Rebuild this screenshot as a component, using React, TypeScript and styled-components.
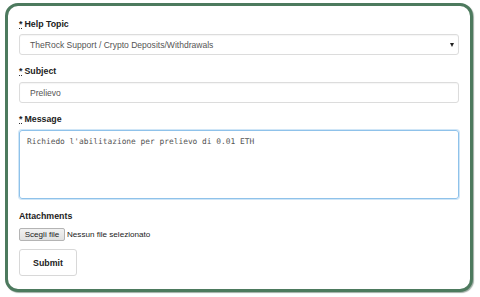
import React from "react";
import styled, { createGlobalStyle } from "styled-components";

const Global = createGlobalStyle`
  html, body { margin: 0; padding: 0; background: #ffffff; }
  body { font-family: "Liberation Sans", Arial, sans-serif; }
  * { box-sizing: border-box; }
`;

const Page = styled.div`
  width: 480px;
  height: 297px;
  padding: 3px 7px 5px 5px;
  background: #ffffff;
`;

const Frame = styled.form`
  height: 289px;
  border: 3px solid #4d7a5e;
  border-radius: 13px;
  box-shadow: 1px 1px 1px rgba(40, 70, 50, 0.45);
  background: #ffffff;
  padding: 12px 11px 13px 11px;
  display: flex;
  flex-direction: column;
`;

const Group = styled.div<{ $gap: number }>`
  display: flex;
  flex-direction: column;
  margin-bottom: ${(p) => p.$gap}px;
`;

const Label = styled.label<{ $mb: number }>`
  font-size: 8.8px;
  line-height: 12px;
  font-weight: 700;
  color: #222;
  margin-bottom: ${(p) => p.$mb}px;
  display: flex;
  align-items: baseline;
  gap: 2px;
`;

const Req = styled.abbr`
  text-decoration: none;
  border-bottom: 1px dotted #333;
  line-height: 7px;
  font-size: 8.8px;
`;

const Field = styled.div`
  position: relative;
  height: 21px;
  border: 1px solid #dcdcdc;
  border-radius: 3px;
  box-shadow: inset 0 1px 1px rgba(0, 0, 0, 0.04);
  display: flex;
  align-items: center;
  padding: 0 10px;
  font-size: 8.55px;
  color: #555;
`;

const Arrow = styled.span`
  position: absolute;
  right: 4px;
  top: 8px;
  width: 0;
  height: 0;
  border-left: 2.5px solid transparent;
  border-right: 2.5px solid transparent;
  border-top: 4px solid #222;
`;

const TextArea = styled.div`
  height: 69px;
  border: 1px solid #8fc2ea;
  border-radius: 3px;
  box-shadow: 0 0 0 1px rgba(170, 210, 240, 0.55);
  padding: 6px 7px;
  font-family: "DejaVu Sans Mono", "Liberation Mono", monospace;
  font-size: 7.86px;
  line-height: 10px;
  color: #555;
  white-space: pre;
`;

const FileRow = styled.div`
  display: flex;
  align-items: center;
  gap: 2px;
  font-size: 8.1px;
  color: #222;
`;

const FileButton = styled.span`
  height: 13px;
  width: 46px;
  display: flex;
  align-items: center;
  justify-content: center;
  background: linear-gradient(#f2f2f2, #e0e0e0);
  border: 1px solid #b4b4b4;
  border-radius: 2px;
  font-size: 8.1px;
  color: #222;
`;

const Submit = styled.button`
  width: 58px;
  height: 27px;
  background: #ffffff;
  border: 1px solid #d8d8d8;
  border-radius: 3px;
  font-family: "Liberation Sans", Arial, sans-serif;
  font-weight: 700;
  font-size: 8.8px;
  color: #222;
  padding: 0;
`;

export default function App() {
  return (
    <Page>
      <Global />
      <Frame onSubmit={(e) => e.preventDefault()}>
        <Group $gap={10}>
          <Label $mb={4}>
            <Req title="required">*</Req> Help Topic
          </Label>
          <Field>
            TheRock Support / Crypto Deposits/Withdrawals
            <Arrow />
          </Field>
        </Group>
        <Group $gap={10}>
          <Label $mb={5}>
            <Req title="required">*</Req> Subject
          </Label>
          <Field>Prelievo</Field>
        </Group>
        <Group $gap={11}>
          <Label $mb={5}>
            <Req title="required">*</Req> Message
          </Label>
          <TextArea>Richiedo l'abilitazione per prelievo di 0.01 ETH</TextArea>
        </Group>
        <Group $gap={8}>
          <Label $mb={6}>Attachments</Label>
          <FileRow>
            <FileButton>Scegli file</FileButton>
            <span>Nessun file selezionato</span>
          </FileRow>
        </Group>
        <div>
          <Submit type="submit">Submit</Submit>
        </div>
      </Frame>
    </Page>
  );
}
